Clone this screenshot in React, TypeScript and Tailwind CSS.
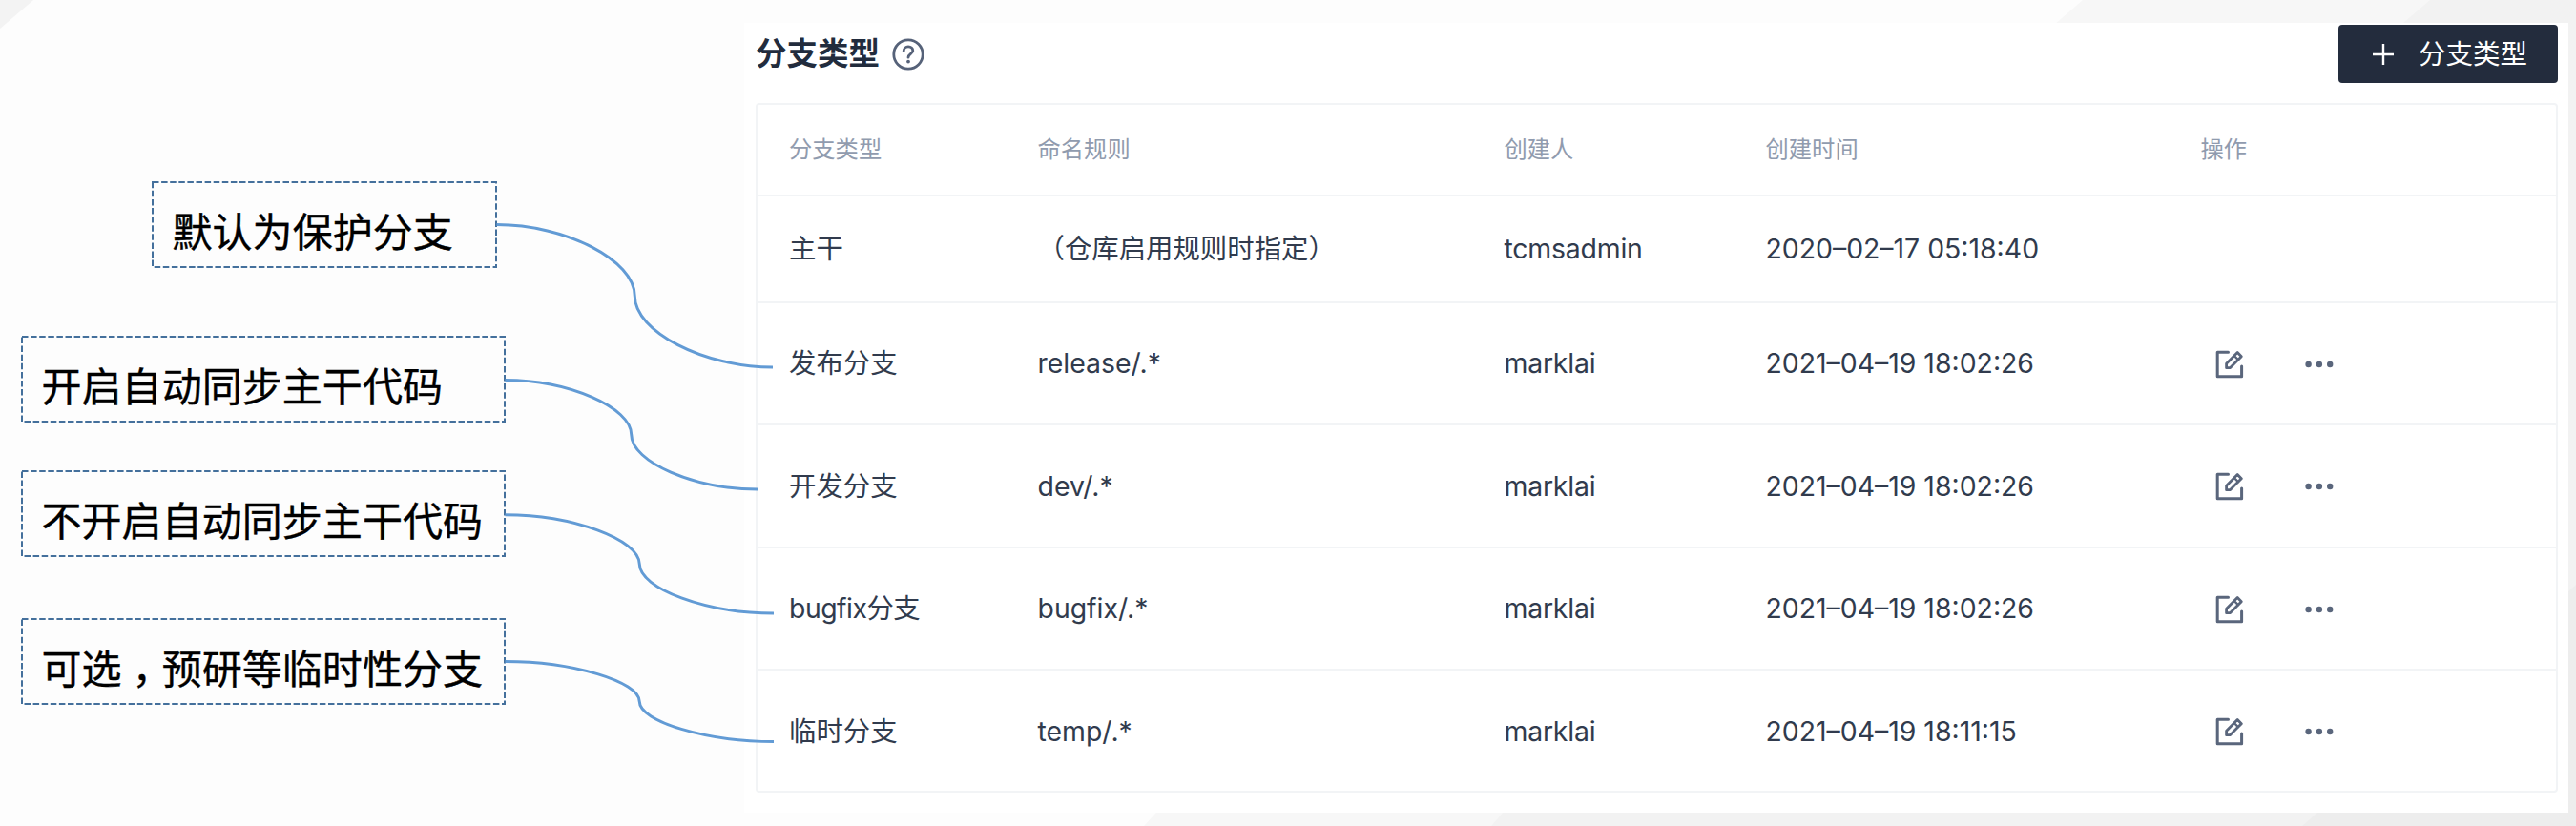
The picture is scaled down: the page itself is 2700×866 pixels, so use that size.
import React from "react";

const cjk = "font-['Inter','Noto_Sans_CJK_SC',sans-serif]";

function EditIcon() {
  return (
    <svg width="32" height="32" viewBox="0 0 32 32" fill="none" stroke="#5a667c" strokeWidth="3" strokeLinejoin="round" strokeLinecap="round">
      <path d="M14.5 3.3H3.2V28.7H28.6V18" />
      <path d="M12.6 19.6V15.2L24.2 3.6L28.3 7.7L16.6 19.4Q16.3 19.7 15.8 19.7H12.6Z" strokeWidth="2.8" />
      <path d="M20.8 7L24.9 11.1" strokeWidth="2.4" />
    </svg>
  );
}

function MoreIcon() {
  return (
    <svg width="30" height="8" viewBox="0 0 30 8" fill="#5a667c">
      <circle cx="3.6" cy="4" r="3.2" />
      <circle cx="14.9" cy="4" r="3.2" />
      <circle cx="26.2" cy="4" r="3.2" />
    </svg>
  );
}

function HelpIcon() {
  return (
    <svg width="34" height="34" viewBox="0 0 34 34" fill="none" stroke="#566279" strokeWidth="2.8" strokeLinecap="round">
      <circle cx="17" cy="17" r="15.2" />
      <path d="M12.2 13.6C12.2 10.8 14.3 8.9 17 8.9S21.8 10.7 21.8 13.2C21.8 16.2 17 16.6 17 20.2" />
      <circle cx="17" cy="24.6" r="1.9" fill="#566279" stroke="none" />
    </svg>
  );
}

const cols = "grid grid-cols-[260.5px_489px_274px_456px_1fr] pl-[33px] items-center";

const rows = [
  { type: "主干", rule: "（仓库启用规则时指定）", user: "tcmsadmin", time: "2020–02–17 05:18:40", h: "h-[112px]", ops: false },
  { type: "发布分支", rule: "release/.*", user: "marklai", time: "2021–04–19 18:02:26", h: "h-[128.5px]", ops: true },
  { type: "开发分支", rule: "dev/.*", user: "marklai", time: "2021–04–19 18:02:26", h: "h-[128.5px]", ops: true },
  { type: "bugfix分支", rule: "bugfix/.*", user: "marklai", time: "2021–04–19 18:02:26", h: "h-[128.5px]", ops: true },
  { type: "临时分支", rule: "temp/.*", user: "marklai", time: "2021–04–19 18:11:15", h: "h-[126px]", ops: true },
];

const notes = [
  { parts: ["默认为保护分支"], box: "ml-[137px] w-[362px] mb-[71px]", w: 362 },
  { parts: ["开启自动同步主干代码"], box: "w-[508px] mb-[50px]", w: 508 },
  { parts: ["不开启自动同步主干代码"], box: "w-[508px] mb-[63.5px]", w: 508 },
  { parts: ["可选", "，", "预研等临时性分支"], box: "w-[508px]", w: 508 },
];

const links = [
  [520.5, 235.5, 810, 385],
  [529.5, 398.5, 794, 513],
  [529.5, 539.7, 811, 643],
  [529.5, 693.5, 811, 777.5],
];

function curve([x1, y1, x2, y2]: number[]) {
  const w = x2 - x1;
  const h = y2 - y1;
  const m = x1 + w / 2;
  return `M${x1} ${y1}C${x1 + w / 4} ${y1} ${m} ${y1 + h / 4} ${m} ${y1 + h / 2}S${x1 + (w * 3) / 4} ${y2} ${x2} ${y2}`;
}

export default function App() {
  return (
    <div className={`relative flex h-[866px] w-[2700px] overflow-hidden bg-[#fdfdfd] ${cjk}`}>
      <svg className="absolute inset-0" width="2700" height="866">
        <path d="M0 0H35L0 30Z" fill="#f3f3f3" />
        <path d="M2183 0H2700V866H1199L1259 800Z" fill="#f7f7f7" />
        <path d="M2547 0H2700V866H1563L1637 780Z" fill="#f2f2f2" />
        <path d="M2700 613V866H2413Z" fill="#ededed" />
      </svg>

      <aside className="relative w-[780px] shrink-0 pt-[190px] pl-[22px]">
        {notes.map((n) => (
          <div key={n.parts[0]} className={`relative flex h-[91px] items-center pl-[21.5px] pt-[11px] ${n.box}`}>
            <svg className="absolute inset-0" width={n.w} height="91">
              <rect x="1" y="1" width={n.w - 2} height="89" fill="none" stroke="#44709c" strokeWidth="2" strokeDasharray="6.5 2.6" />
            </svg>
            <span className="whitespace-nowrap text-[42px] leading-none tracking-[0.05px] text-black font-['Noto_Sans_CJK_SC',sans-serif] [-webkit-text-stroke:0.4px_black]">
              {n.parts.map((p) => (
                <span key={p} className={p === "，" ? "relative top-[12px] font-['Noto_Sans_CJK_TC',sans-serif]" : ""}>{p}</span>
              ))}
            </span>
          </div>
        ))}
      </aside>

      <main className="relative mt-[24px] h-[828px] w-[1912px] bg-white pl-[12px] pr-[11px] pt-[2px]">
        <header className="flex h-[61px] items-center justify-between">
          <div className="flex items-center gap-[13px]">
            <h1 className="pt-[2px] text-[32.5px] font-semibold leading-none text-[#222c3d]">分支类型</h1>
            <HelpIcon />
          </div>
          <button className="flex h-[61px] w-[230px] items-center rounded-[4px] bg-[#232c3d] pl-[35px] text-white">
            <svg width="24" height="24" viewBox="0 0 24 24" stroke="#fff" strokeWidth="2.4">
              <path d="M12 1V23M1 12H23" />
            </svg>
            <span className="ml-[25px] pt-[2px] text-[28.5px] leading-none">分支类型</span>
          </button>
        </header>

        <section className="mt-[20.5px] rounded-[4px] border-2 border-[#f2f4f6]">
          <div className={`${cols} h-[96px] border-b-2 border-[#f2f4f6] pb-[1px] text-[24.3px] text-[#909bae]`}>
            <span>分支类型</span>
            <span>命名规则</span>
            <span>创建人</span>
            <span>创建时间</span>
            <span>操作</span>
          </div>
          {rows.map((r) => (
            <div key={r.type} className={`${cols} ${r.h} border-b-2 border-[#f2f4f6] pt-[2px] text-[28.4px] text-[#313b4d] last:border-b-0`}>
              <span className={r.type.startsWith("bugfix") ? "tracking-[-0.5px]" : ""}>{r.type}</span>
              <span>{r.rule}</span>
              <span className="tracking-[-0.2px]">{r.user}</span>
              <span>{r.time}</span>
              {r.ops && (
                <span className="flex items-center gap-[63px] pl-[14.5px]">
                  <EditIcon />
                  <MoreIcon />
                </span>
              )}
            </div>
          ))}
        </section>
      </main>

      <svg className="absolute inset-0" width="2700" height="866" fill="none" stroke="#629bd5" strokeWidth="3">
        {links.map((l, i) => (
          <path key={i} d={curve(l)} />
        ))}
      </svg>
    </div>
  );
}
